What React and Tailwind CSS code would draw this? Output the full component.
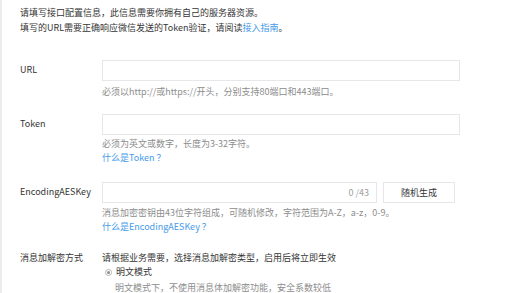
const Field = ({ label, children, labelTop = "mt-[3px]" }) => (
  <div className="flex">
    <div className={`w-[82px] shrink-0 text-[#353535] ${labelTop}`}>{label}</div>
    <div className="flex-1">{children}</div>
  </div>
)

const App = () => {
  return (
    <div
      className="w-[520px] h-[293px] overflow-hidden bg-white border-l-2 border-[#ececec] pl-[18px] text-[9px] leading-[14px]"
      style={{ fontFamily: '"Noto Sans CJK SC", "Microsoft YaHei", sans-serif' }}
    >
      {/* intro */}
      <div className="pt-[5px] leading-[15px] text-[#353535]">
        <p>请填写接口配置信息，此信息需要你拥有自己的服务器资源。</p>
        <p>
          填写的URL需要正确响应微信发送的Token验证，请阅读
          <a className="text-[#459ae9]">接入指南</a>。
        </p>
      </div>

      <div className="mt-[25px]">
        <Field label="URL">
          <input className="block w-[358px] h-[21px] border border-[#e7e7eb] outline-none" />
          <p className="mt-[4px] text-[#8d8d8d]">必须以http://或https://开头，分别支持80端口和443端口。</p>
        </Field>
      </div>

      <div className="mt-[15px]">
        <Field label="Token">
          <input className="block w-[358px] h-[21px] border border-[#e7e7eb] outline-none" />
          <p className="mt-[2px] text-[#8d8d8d]">必须为英文或数字，长度为3-32字符。</p>
          <a className="block text-[#459ae9]">什么是Token ？</a>
        </Field>
      </div>

      <div className="mt-[17px]">
        <Field label="EncodingAESKey">
          <div className="flex gap-[6px]">
            <div className="w-[275px] h-[21px] border border-[#e7e7eb] flex items-center justify-end pr-[7px] text-[#a0a0a0]">
              0 /43
            </div>
            <button className="w-[72px] h-[21px] border border-[#e7e7eb] bg-white text-[#353535]">随机生成</button>
          </div>
          <p className="mt-[3px] text-[#8d8d8d]">消息加密密钥由43位字符组成，可随机修改，字符范围为A-Z，a-z，0-9。</p>
          <a className="block text-[#459ae9]">什么是EncodingAESKey ？</a>
        </Field>
      </div>

      <div className="mt-[17px]">
        <Field label="消息加解密方式" labelTop="">
          <p className="text-[#353535]">请根据业务需要，选择消息加解密类型，启用后将立即生效</p>
          <div className="flex items-center gap-[4px] text-[#353535]">
            <span className="ml-[3px] w-[7px] h-[7px] rounded-full border border-[#b5b5b5] flex items-center justify-center">
              <span className="w-[3px] h-[3px] rounded-full bg-[#8d8d8d]" />
            </span>
            明文模式
          </div>
          <p className="mt-[2px] pl-[13px] text-[#8d8d8d]">明文模式下，不使用消息体加解密功能，安全系数较低</p>
        </Field>
      </div>
    </div>
  )
}

export default App
